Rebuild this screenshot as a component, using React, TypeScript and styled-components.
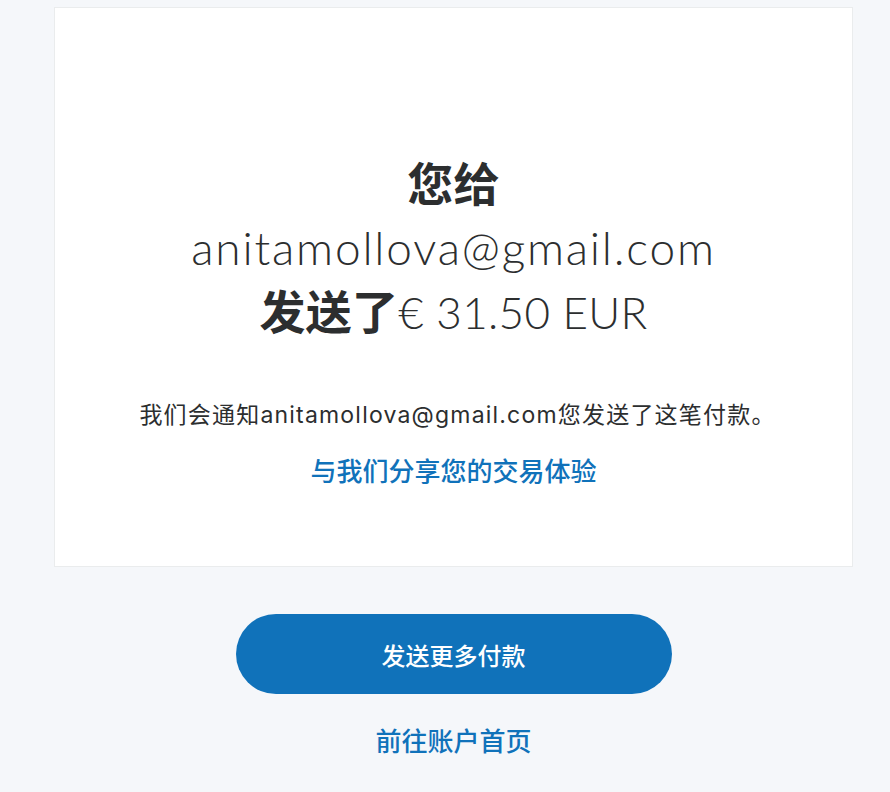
import React from "react";
import styled, { createGlobalStyle } from "styled-components";

const Global = createGlobalStyle`
  html, body { margin: 0; padding: 0; background: #f5f7fa; }
  body { font-family: "Lato", "Noto Sans CJK SC", sans-serif; color: #2c2e2f; }
`;

const Page = styled.div`
  display: flex;
  flex-direction: column;
  align-items: flex-start;
  padding: 7px 0 0 54px;
  min-height: 792px;
  box-sizing: border-box;
`;

const Column = styled.div`
  width: 799px;
  display: flex;
  flex-direction: column;
  align-items: center;
`;

const Card = styled.section`
  box-sizing: border-box;
  width: 799px;
  height: 560px;
  background: #ffffff;
  border: 1px solid #eaeced;
  display: flex;
  flex-direction: column;
  align-items: center;
  padding-top: 144px;
`;

const Title = styled.h1`
  margin: 0;
  text-align: center;
  font-size: 44px;
  line-height: 64px;
  font-weight: 300;
  color: #2c2e2f;
  font-family: "Lato", "Noto Sans CJK SC", sans-serif;
`;

const Strong = styled.span`
  font-weight: 700;
  font-size: 46px;
  line-height: 1;
  font-family: "Noto Sans CJK SC", sans-serif;
`;

const Line = styled.span<{ $wide?: boolean }>`
  display: block;
  font-size: ${(p) => (p.$wide ? 46 : 44)}px;
  letter-spacing: ${(p) => (p.$wide ? 1.8 : 0.3)}px;
`;

const Note = styled.p`
  margin: 56px 0 0;
  padding-left: 8px;
  font-family: "Inter", "Noto Sans CJK SC", sans-serif;
  font-size: 23px;
  letter-spacing: 1.2px;
  line-height: 30px;
  color: #2c2e2f;
`;

const Link = styled.a<{ $size?: number }>`
  display: block;
  color: #1072ba;
  font-family: "Noto Sans CJK SC", sans-serif;
  font-weight: 500;
  font-size: ${(p) => p.$size ?? 26}px;
  line-height: 34px;
  text-decoration: none;
  cursor: pointer;
`;

const CardLink = styled(Link)`
  margin-top: 23px;
`;

const PrimaryButton = styled.button`
  margin-top: 47px;
  width: 436px;
  height: 80px;
  border: none;
  border-radius: 40px;
  background: #1072ba;
  color: #ffffff;
  font-family: "Noto Sans CJK SC", sans-serif;
  font-weight: 500;
  font-size: 24px;
  cursor: pointer;
`;

const FooterLink = styled(Link)`
  margin-top: 29px;
`;

export default function App() {
  return (
    <>
      <Global />
      <Page>
        <Column>
          <Card>
            <Title>
              <Line><Strong>您给</Strong></Line>
              <Line $wide>anitamollova@gmail.com</Line>
              <Line><Strong>发送了</Strong>€ 31.50 EUR</Line>
            </Title>
            <Note>我们会通知anitamollova@gmail.com您发送了这笔付款。</Note>
            <CardLink>与我们分享您的交易体验</CardLink>
          </Card>
          <PrimaryButton>发送更多付款</PrimaryButton>
          <FooterLink $size={26}>前往账户首页</FooterLink>
        </Column>
      </Page>
    </>
  );
}
